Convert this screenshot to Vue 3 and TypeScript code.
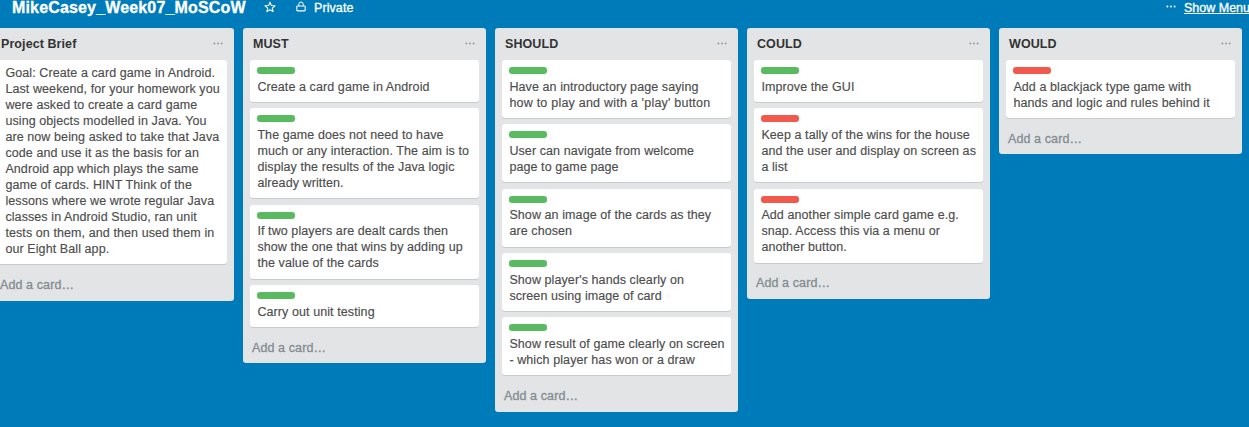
<script setup lang="ts">
interface Card { label?: 'green' | 'red'; lines: string[]; wideLine?: number }
interface List { title: string; cards: Card[] }

const lists: List[] = [
  {
    title: 'Project Brief',
    cards: [{
      lines: [
        'Goal: Create a card game in Android.',
        'Last weekend, for your homework you',
        'were asked to create a card game',
        'using objects modelled in Java. You',
        'are now being asked to take that Java',
        'code and use it as the basis for an',
        'Android app which plays the same',
        'game of cards. HINT Think of the',
        'lessons where we wrote regular Java',
        'classes in Android Studio, ran unit',
        'tests on them, and then used them in',
        'our Eight Ball app.',
      ],
    }],
  },
  {
    title: 'MUST',
    cards: [
      { label: 'green', lines: ['Create a card game in Android'] },
      { label: 'green', lines: ['The game does not need to have', 'much or any interaction. The aim is to', 'display the results of the Java logic', 'already written.'] },
      { label: 'green', lines: ['If two players are dealt cards then', 'show the one that wins by adding up', 'the value of the cards'] },
      { label: 'green', lines: ['Carry out unit testing'] },
    ],
  },
  {
    title: 'SHOULD',
    cards: [
      { label: 'green', lines: ['Have an introductory page saying', "how to play and with a 'play' button"], wideLine: 1 },
      { label: 'green', lines: ['User can navigate from welcome', 'page to game page'] },
      { label: 'green', lines: ['Show an image of the cards as they', 'are chosen'] },
      { label: 'green', lines: ["Show player's hands clearly on", 'screen using image of card'] },
      { label: 'green', lines: ['Show result of game clearly on screen', '- which player has won or a draw'] },
    ],
  },
  {
    title: 'COULD',
    cards: [
      { label: 'green', lines: ['Improve the GUI'] },
      { label: 'red', lines: ['Keep a tally of the wins for the house', 'and the user and display on screen as', 'a list'] },
      { label: 'red', lines: ['Add another simple card game e.g.', 'snap. Access this via a menu or', 'another button.'] },
    ],
  },
  {
    title: 'WOULD',
    cards: [
      { label: 'red', lines: ['Add a blackjack type game with', 'hands and logic and rules behind it'] },
    ],
  },
]
</script>

<template>
  <div class="board">
    <header class="bar">
      <h1 class="name">MikeCasey_Week07_MoSCoW</h1>
      <svg class="star" viewBox="0 0 12 12" width="12" height="12">
        <path d="M6 1.2 7.4 4.5 11 4.8 8.3 7.1 9.1 10.6 6 8.8 2.9 10.6 3.7 7.1 1 4.8 4.6 4.5Z" fill="none" stroke="#fff" stroke-width="1.1" stroke-linejoin="round" />
      </svg>
      <svg class="lock" viewBox="0 0 10 11" width="10" height="11">
        <path d="M2.8 4.9V3.2a2.2 2.2 0 0 1 4.4 0v1.7" fill="none" stroke="#fff" stroke-width="1" />
        <rect x="0.8" y="5" width="8.4" height="4.9" rx="0.8" fill="none" stroke="#fff" stroke-width="1.1" />
      </svg>
      <span class="private">Private</span>
      <svg class="dots menu-dots" viewBox="0 0 10 3" width="10" height="3">
        <circle cx="1.4" cy="1.5" r="1" /><circle cx="5" cy="1.5" r="1" /><circle cx="8.6" cy="1.5" r="1" />
      </svg>
      <a class="menu">Show Menu</a>
    </header>
    <main class="lists">
      <section v-for="list in lists" :key="list.title" class="list">
        <div class="head">
          <h2 class="title">{{ list.title }}</h2>
          <svg class="dots" viewBox="0 0 10 3" width="10" height="3">
            <circle cx="1.4" cy="1.5" r="1" /><circle cx="5" cy="1.5" r="1" /><circle cx="8.6" cy="1.5" r="1" />
          </svg>
        </div>
        <div class="cards">
          <article v-for="(card, i) in list.cards" :key="i" class="card">
            <div v-if="card.label" class="label" :class="card.label" />
            <div v-for="(line, n) in card.lines" :key="n" class="line" :class="{ wide: card.wideLine === n }">{{ line }}</div>
          </article>
        </div>
        <div class="add">Add a card…</div>
      </section>
    </main>
  </div>
</template>

<style>
body { margin: 0; overflow: hidden; }
</style>

<style scoped>
.board {
  width: 1249px;
  height: 427px;
  overflow: hidden;
  background: #007bba;
  font-family: "Liberation Sans", Arial, sans-serif;
  font-size: 12.5px;
  color: #4d4d4d;
}
.bar {
  display: flex;
  align-items: center;
  height: 28px;
  box-sizing: border-box;
  padding: 0 0 12px 12px;
  color: #fff;
  white-space: nowrap;
}
.name { margin: 0; width: 252px; font-size: 16px; line-height: 16px; font-weight: 700; letter-spacing: 0.16px; -webkit-text-stroke: 0.3px #fff; }
.star { flex: none; margin: 0 20px 3px 0; }
.lock { flex: none; margin-right: 8px; margin-bottom: 4px; }
.private { line-height: 14px; letter-spacing: 0.08px; -webkit-text-stroke: 0.3px #fff; }
.menu { width: 65px; line-height: 14px; text-decoration: underline; -webkit-text-stroke: 0.3px #fff; }
.lists { display: flex; align-items: flex-start; gap: 9px; margin-left: -9px; }
.list { flex: none; width: 243px; box-sizing: border-box; padding: 0 7px; background: #e2e4e6; border-radius: 3px; }
.head { display: flex; align-items: center; justify-content: space-between; height: 32px; padding: 0 4px 0 3px; }
.title { margin: 0; font-size: 12.5px; line-height: 16px; font-weight: 700; letter-spacing: 0.08px; color: #333; }
.dots { flex: none; fill: #999; margin-bottom: 1px; }
.menu-dots { fill: #fff; margin: 0 8px 3px auto; }
.cards { display: flex; flex-direction: column; gap: 6.3px; }
.card { padding: 5.2px 0 7.3px 7.4px; background: #fff; border-radius: 3px; box-shadow: 0 1px 0 #c8cacc; }
.label { width: 38px; height: 7px; margin: 1.8px 0 4.73px -0.4px; border-radius: 3px; }
.green { background: #5aba60; }
.red { background: #f0594c; }
.line { line-height: 16px; white-space: nowrap; letter-spacing: 0.09px; -webkit-text-stroke: 0.15px #4d4d4d; }
.line.wide { letter-spacing: 0.22px; }
.add { height: 36.4px; box-sizing: border-box; padding: 12.8px 0 0 2px; line-height: 16px; letter-spacing: 0.1px; color: #838c91; -webkit-text-stroke: 0.3px #838c91; }
</style>
